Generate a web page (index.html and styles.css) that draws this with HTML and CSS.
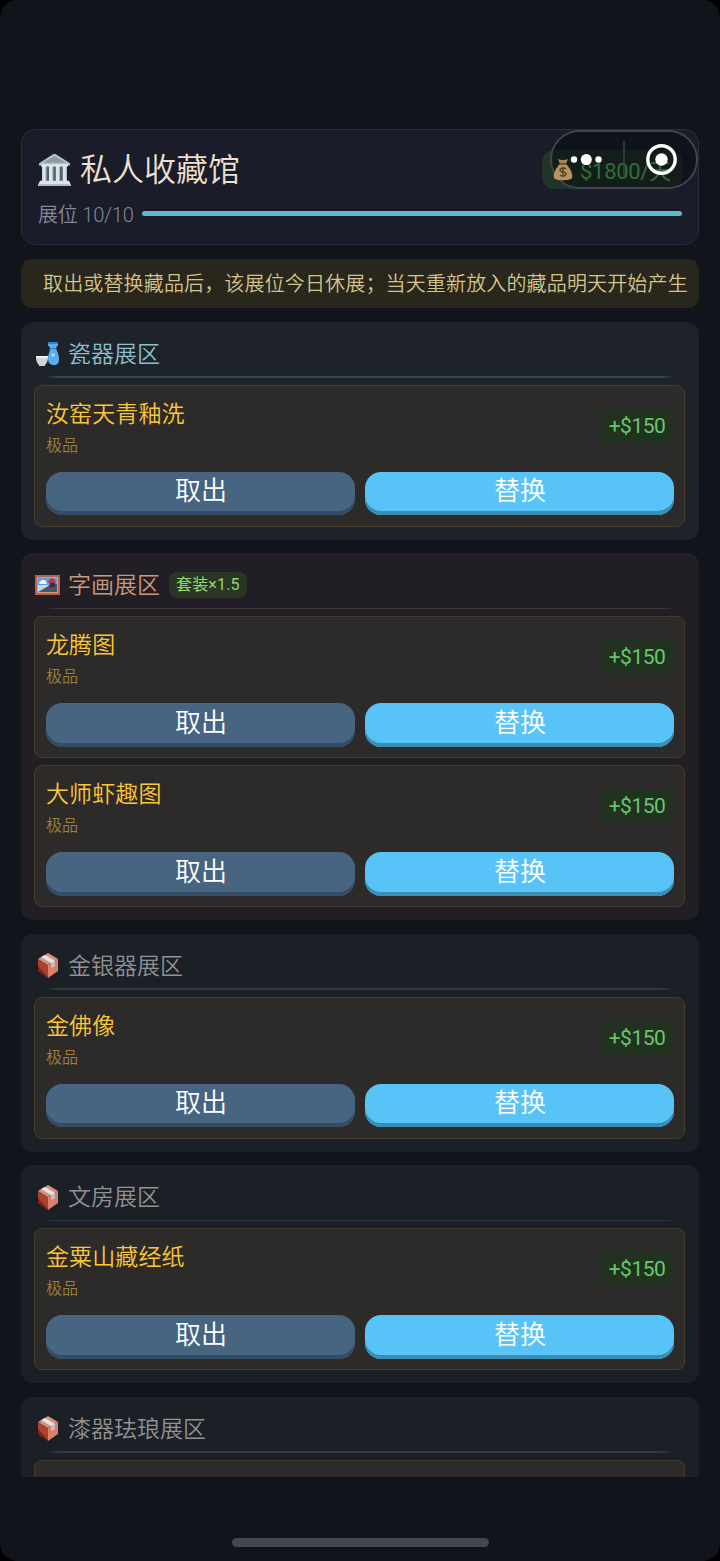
FILE: index.html
```
<!DOCTYPE html>
<html lang="zh-CN">
<head>
<meta charset="utf-8">
<title>私人收藏馆</title>
<link rel="stylesheet" href="styles.css">
</head>
<body>
<svg class="defs" aria-hidden="true">
  <symbol id="box" viewBox="0 0 24 28">
    <path fill="#a8432f" d="M2 8 12 14V27L2 20Z"/>
    <path fill="#dc8068" d="M12 14 22 8V20L12 27Z"/>
    <path fill="#d9907c" d="M2 8 12 2 22 8 12 14Z"/>
    <path fill="#7e2219" d="M2 15 12 26V27L2 20Z"/>
    <path fill="#dfe5e8" d="M5 6 9 4 19 10V15L15 16V12Z"/>
    <path fill="#b7c3c8" d="M15 12 19 10V15L15 17Z"/>
  </symbol>
</svg>
<div class="screen">
  <main class="gallery">
    <header class="hero">
      <div class="hero-top">
        <svg class="museum" viewBox="0 0 32 32">
          <path fill="#b5c2c9" d="M1 10 15 1h2l14 9v2H1z"/>
          <path fill="#8c9ba3" d="M5 9.5 16 3l11 6.500z"/>
          <path fill="#52636c" d="M4 12h24v15H4z"/>
          <path fill="#dce5e9" d="M3 11h26v2H3zM4 13h4v14H4zM10.700 13h4v14h-4zM17.300 13h4v14h-4zM24 13h4v14h-4zM2 27h28l2 4H0z"/>
          <path fill="#aebcc4" d="M7 13h1v14H7zM13.700 13h1v14h-1zM20.300 13h1v14h-1zM27 13h1v14h-1zM0 30h32v2H0z"/>
        </svg>
        <h1 class="title">私人收藏馆</h1>
        <div class="income">
          <svg class="money" viewBox="0 0 20 23">
            <path fill="#a8854f" d="M5 1q5 2 10 0l-2 5H7z"/>
            <path fill="#b8935a" d="M7 6h6c4 4 7 9 6 14-1 3-17 3-18 0C0 15 3 10 7 6z"/>
            <path fill="none" stroke="#54462e" stroke-width="1.500" d="M7 6h6M13 11c-2-2-6-1-6 1 0 3 6 1 6 4 0 2-4 3-6 1M10 9v10"/>
          </svg>
          <span>$1800/天</span>
        </div>
      </div>
      <div class="slots"><span>展位 10/10</span><div class="progress"></div></div>
    </header>
    <div class="notice">取出或替换藏品后，该展位今日休展；当天重新放入的藏品明天开始产生</div>

    <section class="zone porcelain">
      <div class="zone-head">
        <svg class="zone-icon" viewBox="0 0 26 28">
          <path fill="#5aaeee" d="M13 3h10v3l-2 3c1 4 3 6 3 10 0 5-1 7-5 7s-6-2-6-7c0-4 2-6 2-10l-2-3z"/>
          <path fill="#2f83c6" d="M13 3h10v2H13zM15 9h6v1h-6z"/>
          <circle fill="#9bd4fa" cx="18" cy="16" r="2"/>
          <path fill="#d1d4d8" d="M1 18h12c0 5-2 7-3 8v1H4v-1c-1-1-3-3-3-8z"/>
          <path fill="#f0f0f0" d="M1 17h12v2H1z"/>
        </svg>
        <h2>瓷器展区</h2>
      </div>
      <article class="card">
        <div class="item"><div><h3>汝窑天青釉洗</h3><p>极品</p></div><span class="gain">+$150</span></div>
        <div class="actions"><button class="take">取出</button><button class="swap">替换</button></div>
      </article>
    </section>

    <section class="zone painting">
      <div class="zone-head">
        <svg class="zone-icon" viewBox="0 0 26 28">
          <path fill="#b9614b" d="M0 4h25v20H0z"/>
          <path fill="#d99a82" d="M2 6h21v16H2z"/>
          <path fill="#5d9fe0" d="M3 7h19v14H3z"/>
          <path fill="#b6dbf6" d="M3 14h10v7H3z"/>
          <path fill="#f1f6fb" d="M4 12q0-2 2-2 1-2 3-1 2 0 2 2 2 1 0 2H5z"/>
          <path fill="#475762" d="M3 21 10 17l5-3 7-1v8z"/>
          <path fill="#293443" d="M15 12h5v4h-5z"/>
          <path fill="#c52e48" d="m13 12 1-3 3-2 3 2 1 3z"/>
        </svg>
        <h2>字画展区</h2><span class="set">套装×1.5</span>
      </div>
      <article class="card">
        <div class="item"><div><h3>龙腾图</h3><p>极品</p></div><span class="gain">+$150</span></div>
        <div class="actions"><button class="take">取出</button><button class="swap">替换</button></div>
      </article>
      <article class="card">
        <div class="item"><div><h3>大师虾趣图</h3><p>极品</p></div><span class="gain">+$150</span></div>
        <div class="actions"><button class="take">取出</button><button class="swap">替换</button></div>
      </article>
    </section>

    <section class="zone">
      <div class="zone-head"><svg class="zone-icon"><use href="#box"/></svg><h2>金银器展区</h2></div>
      <article class="card">
        <div class="item"><div><h3>金佛像</h3><p>极品</p></div><span class="gain">+$150</span></div>
        <div class="actions"><button class="take">取出</button><button class="swap">替换</button></div>
      </article>
    </section>

    <section class="zone">
      <div class="zone-head"><svg class="zone-icon"><use href="#box"/></svg><h2>文房展区</h2></div>
      <article class="card">
        <div class="item"><div><h3>金粟山藏经纸</h3><p>极品</p></div><span class="gain">+$150</span></div>
        <div class="actions"><button class="take">取出</button><button class="swap">替换</button></div>
      </article>
    </section>

    <section class="zone">
      <div class="zone-head"><svg class="zone-icon"><use href="#box"/></svg><h2>漆器珐琅展区</h2></div>
      <article class="card"></article>
    </section>
  </main>
  <div class="home-bar"></div>
  <svg class="capsule" viewBox="0 0 148 60">
    <rect x="1" y="1" width="146" height="57" rx="28.500" fill="#05070c" fill-opacity=".5" stroke="#42434b" stroke-width="2"/>
    <path stroke="#3d4046" stroke-width="1.500" d="M74 11v38"/>
    <g fill="#fff"><circle cx="24" cy="29.500" r="3.200"/><circle cx="36.300" cy="29.500" r="5.500"/><circle cx="48.500" cy="29.500" r="3.200"/><circle cx="111.500" cy="29.500" r="6.200"/></g>
    <circle cx="111.500" cy="29.500" r="13.700" fill="none" stroke="#fff" stroke-width="3.400"/>
  </svg>
</div>
</body>
</html>
```
FILE: styles.css
```
* { box-sizing: border-box; }
body { margin: 0; background: #000; }
h1, h2, h3, p { margin: 0; font-weight: inherit; }
.defs { position: absolute; width: 0; height: 0; }
.screen {
  position: relative;
  display: flex;
  flex-direction: column;
  height: 1561px;
  padding: 129px 21px 14.5px;
  overflow: hidden;
  border-radius: 18px;
  background: #11141b;
  font-family: Roboto, "Noto Sans CJK SC", sans-serif;
  font-weight: 350;
}
.gallery {
  display: flex;
  flex-direction: column;
  gap: 13.5px;
  height: 1348px;
  overflow: hidden;
}
.gallery > * { flex-shrink: 0; }
.hero {
  height: 116px;
  padding: 16px 16px 0;
  border: 1px solid #2b2d3c;
  border-radius: 14px;
  background: #1a1c2a;
}
.hero-top { display: flex; align-items: center; height: 46px; }
.museum { width: 33px; height: 33px; margin-right: 9px; }
.title { padding-top: 2px; color: #eee0d0; font-size: 32px; line-height: 46px; }
.income {
  display: flex;
  align-items: center;
  gap: 7px;
  width: 140px;
  height: 39px;
  margin-left: auto;
  padding-left: 11px;
  border-radius: 12px;
  background: #20342a;
  color: #5fd065;
  font-size: 22px;
  font-weight: 400;
  letter-spacing: -.3px;
  white-space: nowrap;
}
.money { position: relative; z-index: 2; width: 20px; height: 23px; flex: none; }
.slots {
  display: flex;
  align-items: center;
  gap: 9px;
  height: 42px;
  color: #85889a;
  font-size: 20px;
  white-space: nowrap;
}
.slots span { width: 95px; letter-spacing: -.2px; }
.progress { flex: 1; height: 5px; border-radius: 3px; background: #64b7cb; }
.notice {
  height: 49.5px;
  padding: 1px 0 0 22px;
  overflow: hidden;
  border-radius: 11px;
  background: #29261c;
  color: #d4c48a;
  font-size: 20px;
  letter-spacing: .15px;
  line-height: 49px;
  white-space: nowrap;
}
.zone {
  display: flex;
  flex-direction: column;
  gap: 7px;
  padding: 0 14px 13px 13px;
  border-radius: 12px;
  background: #1b1f26;
  color: #929294;
}
.porcelain { background: #1e232a; color: #8bbfd2; }
.painting { background: #211f25; color: #c99a79; }
.zone-head { position: relative; display: flex; align-items: center; height: 56px; padding: 7px 0 0 1px; }
.zone-head::after {
  content: "";
  position: absolute;
  right: 11px;
  bottom: 0;
  left: 11px;
  height: 1.5px;
  background: linear-gradient(90deg, transparent, #343940 2%, #343940 98%, transparent);
}
.porcelain .zone-head::after { background: linear-gradient(90deg, transparent, #334750 2%, #334750 98%, transparent); }
.painting .zone-head::after { background: linear-gradient(90deg, transparent, #443b39 2%, #443b39 98%, transparent); }
.zone-icon { width: 26px; height: 28px; margin-right: 7px; }
h2 { padding-top: 2px; font-size: 23px; line-height: 33px; }
.set {
  height: 26px;
  margin-left: 9px;
  padding: 0 7px;
  border-radius: 8px;
  background: #2b3526;
  color: #8edb67;
  font-size: 16px;
  font-weight: 400;
  letter-spacing: .15px;
  line-height: 26px;
}
.card {
  height: 142px;
  padding: 12px 10px 0 11px;
  border: 1px solid #453c2b;
  border-radius: 8px;
  background: #2d2b29;
}
.item { display: flex; justify-content: space-between; height: 74px; }
h3 { color: #fcc737; font-size: 23px; letter-spacing: .1px; line-height: 33px; }
.item p { margin-top: 3px; color: #9b8137; font-size: 16px; line-height: 23px; }
.gain {
  width: 74px;
  height: 34px;
  margin-top: 11px;
  border-radius: 8px;
  background: #213221;
  color: #66c969;
  font-size: 21px;
  font-weight: 400;
  letter-spacing: -.5px;
  line-height: 35px;
  text-align: center;
}
.actions { display: grid; grid-template-columns: 1fr 1fr; gap: 10px; }
button {
  height: 43.500px;
  padding: 0 0 4px 1px;
  border: 0;
  border-radius: 16px;
  color: #fff;
  font: inherit;
  font-size: 26px;
  line-height: 36px;
}
.take { background: #476581; box-shadow: inset 0 -4px #344d65; }
.swap { background: #58c3f7; box-shadow: inset 0 -4px #3c8db4; }
.home-bar { width: 257px; height: 9px; margin: auto auto 0; border-radius: 5px; background: #44474e; }
.capsule { position: absolute; top: 130px; right: 22px; width: 148px; height: 60px; }
```
